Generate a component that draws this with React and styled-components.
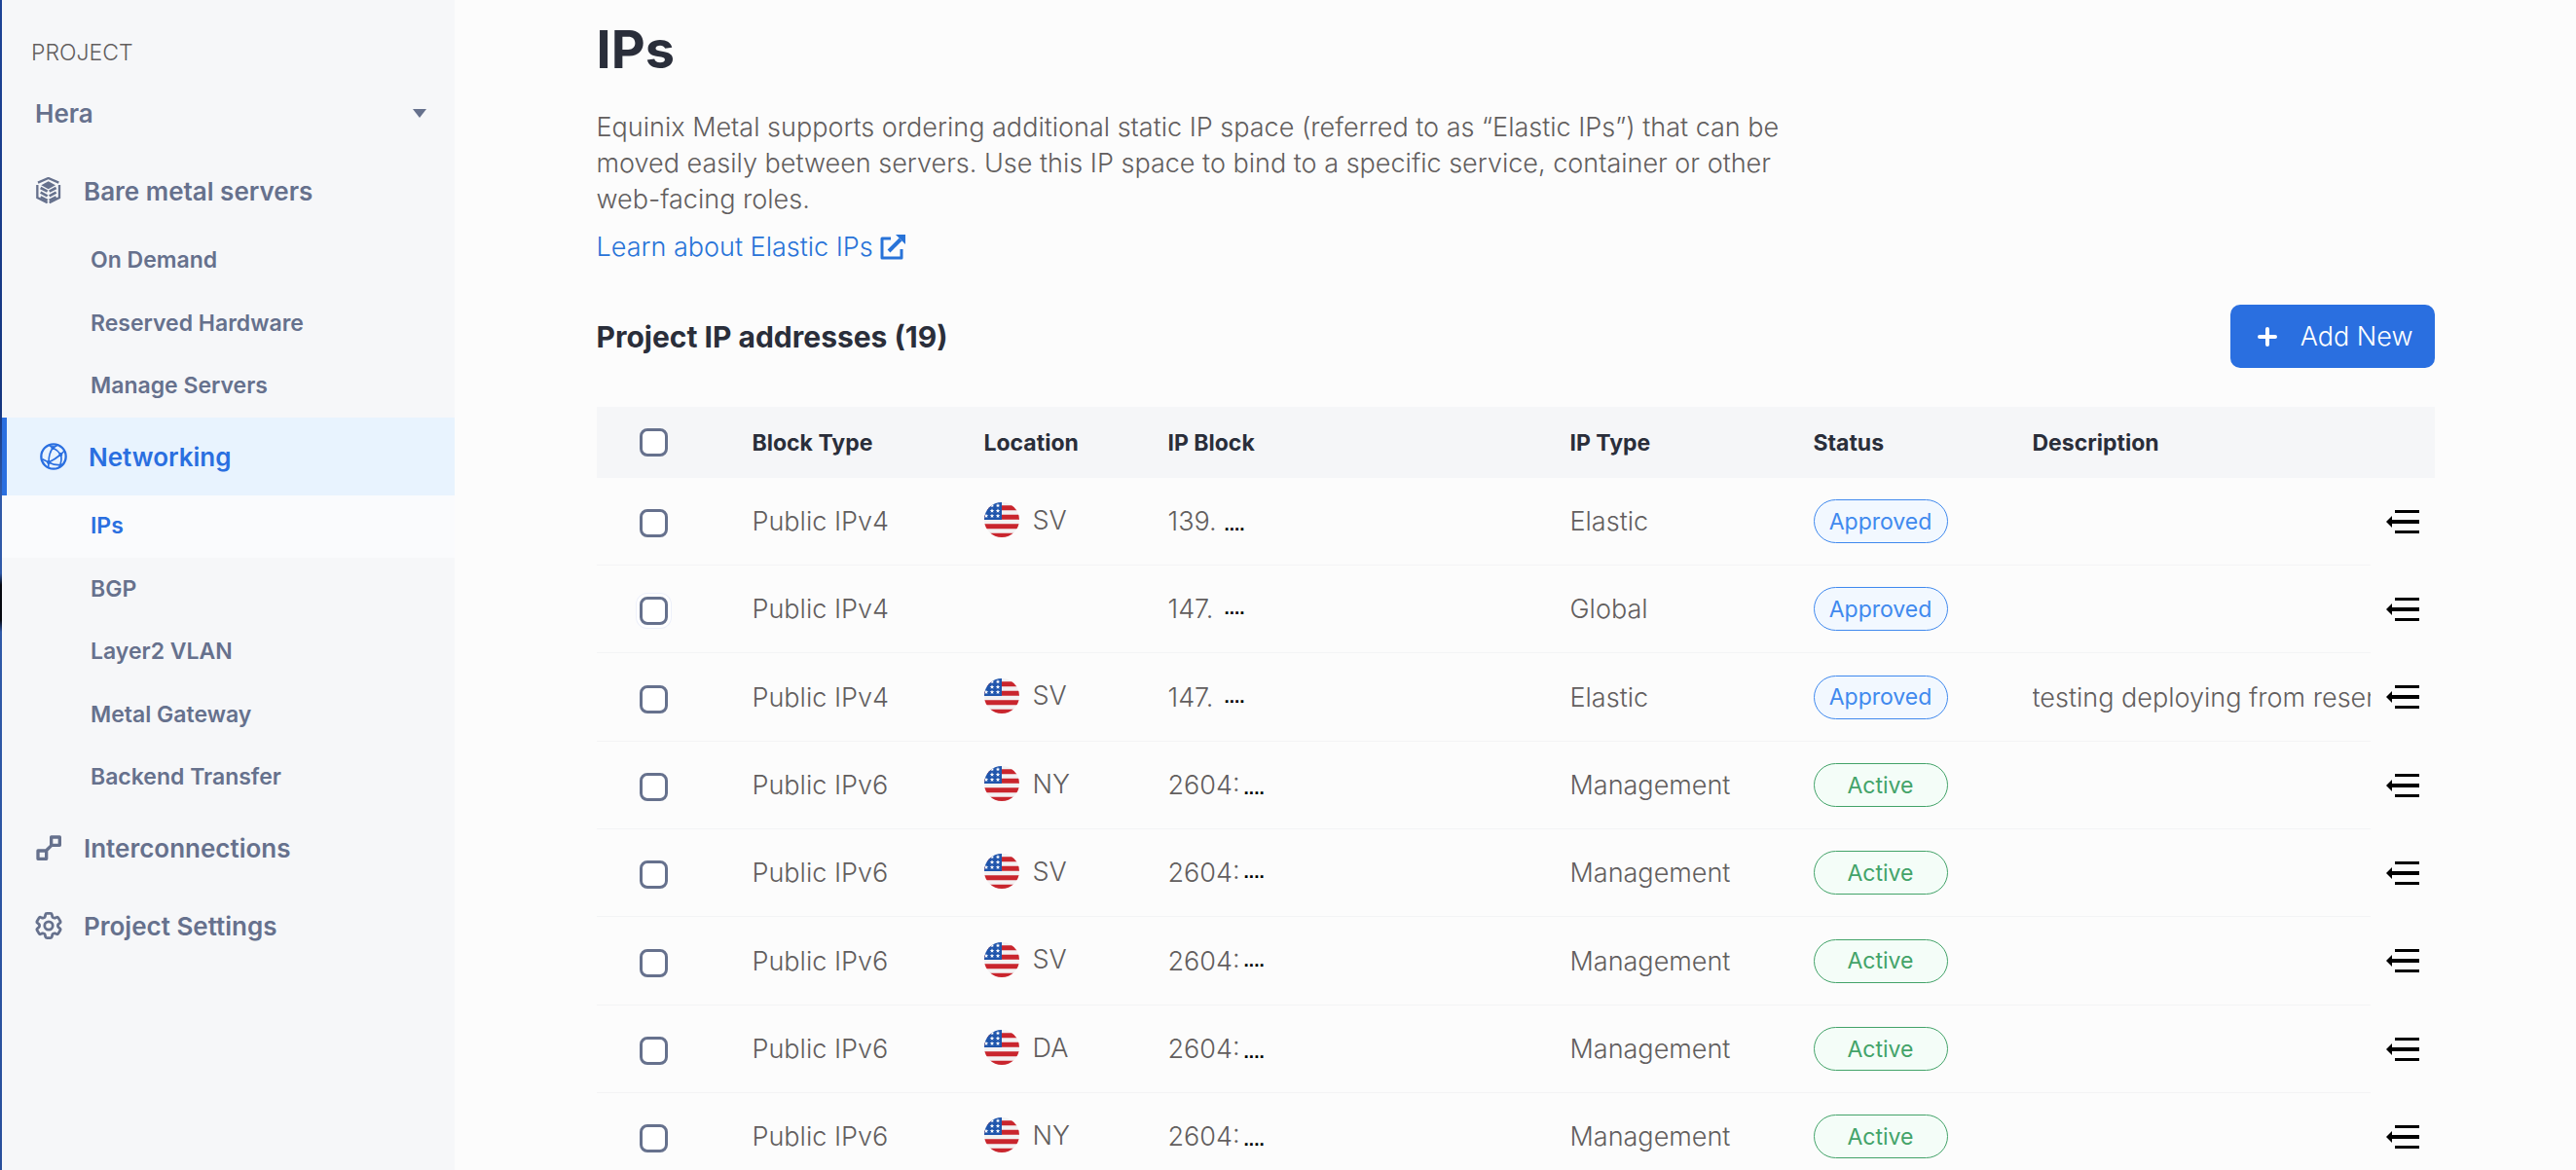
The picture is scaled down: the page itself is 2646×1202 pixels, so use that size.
import React from "react";
import styled, { createGlobalStyle, css, ThemeProvider } from "styled-components";
import { HiOutlineCog6Tooth } from "react-icons/hi2";

const theme = {
  font: `Inter, "Open Sans", "Liberation Sans", sans-serif`,
  color: {
    page: "#fcfcfc",
    panel: "#f6f7f9",
    slate: "#66718d",
    text: "#625e5e",
    heading: "#2a2e3a",
    blue: "#2a6fe0",
    link: "#2873d8",
    activeBg: "#e8f3fe",
    line: "#f3f4f5",
  },
};

const GlobalStyle = createGlobalStyle`
  * {
    box-sizing: border-box;
  }

  body {
    margin: 0;
    background: #fcfcfc;
  }
`;

const Page = styled.div`
  display: flex;
  height: 100vh;
  overflow: hidden;
  font-family: ${({ theme }) => theme.font};
  font-size: 27px;
  font-weight: 300;
  color: ${({ theme }) => theme.color.text};
  background: ${({ theme }) => theme.color.page};
`;

const Edge = styled.div`
  flex: none;
  width: 2px;
  background: linear-gradient(
    #1d4396 0%,
    #14357f 35%,
    #2f59a8 42%,
    #2f59a8 49%,
    #05070f 50%,
    #05070f 53%,
    #2f59a8 54%,
    #284f9c 100%
  );
`;

const Sidebar = styled.aside`
  flex: none;
  width: 465px;
  background: ${({ theme }) => theme.color.panel};
`;

const ProjectLabel = styled.label`
  display: block;
  padding: 40px 30px 0;
  font-size: 23px;
  line-height: 28px;
`;

const ProjectPicker = styled.div`
  display: flex;
  align-items: center;
  height: 88px;
  padding: 8px 28px 0 34px;
`;

const ProjectSelect = styled.select`
  flex: 1;
  appearance: none;
  border: 0;
  padding: 0;
  background: none;
  font: inherit;
  font-size: 26px;
  font-weight: 600;
  color: ${({ theme }) => theme.color.slate};
`;

const Caret = styled.svg`
  flex: none;
  width: 16px;
  height: 9px;
  fill: ${({ theme }) => theme.color.slate};
`;

const NavList = styled.ul`
  margin: 0;
  padding: 0;
  list-style: none;
`;

const NavLink = styled.a`
  display: flex;
  align-items: center;
  gap: 22px;
  height: 80px;
  padding-left: 34px;
  font-size: 26px;
  font-weight: 600;
  text-decoration: none;
  color: ${({ theme }) => theme.color.slate};

  svg {
    width: 28px;
    height: 28px;
  }

  ${({ $active, theme }) =>
    $active &&
    css`
      border-left: 5px solid ${theme.color.blue};
      color: ${theme.color.blue};
      background: ${theme.color.activeBg};
    `}
`;

const SubItem = styled.li`
  height: 64px;

  &:nth-child(even) {
    height: 65px;
  }
`;

const SubLink = styled.a`
  display: flex;
  align-items: center;
  height: 100%;
  padding: 0 0 2px 91px;
  font-size: 23px;
  font-weight: 600;
  text-decoration: none;
  color: ${({ theme, $active }) =>
    $active ? theme.color.blue : theme.color.slate};
  background: ${({ $active }) => ($active ? "#fafbfd" : "none")};
`;

const Main = styled.main`
  flex: 1;
  min-width: 0;
  overflow: hidden auto;
  scrollbar-width: none;
`;

const Content = styled.div`
  max-width: 1888px;
  margin: 0 auto;
`;

const Title = styled.h1`
  margin: 0;
  padding-top: 18px;
  font-size: 54px;
  line-height: 66px;
  font-weight: 700;
  color: ${({ theme }) => theme.color.heading};
`;

const Intro = styled.p`
  max-width: 1240px;
  margin: 28px 0 0;
  line-height: 37px;
`;

const LearnLink = styled.a`
  display: inline-flex;
  align-items: center;
  gap: 6px;
  margin-top: 13px;
  line-height: 36px;
  text-decoration: none;
  color: ${({ theme }) => theme.color.link};

  svg {
    width: 28px;
    height: 28px;
  }
`;

const Toolbar = styled.div`
  display: flex;
  align-items: center;
  justify-content: space-between;
  margin: 41px 0 40px;
`;

const SubTitle = styled.h2`
  margin: 0;
  font-size: 30px;
  font-weight: 700;
  color: ${({ theme }) => theme.color.heading};
`;

const AddButton = styled.button`
  display: flex;
  align-items: center;
  gap: 24px;
  height: 65px;
  padding: 0 22px 0 28px;
  border: 0;
  border-radius: 10px;
  font: inherit;
  color: #fff;
  background: ${({ theme }) => theme.color.blue};

  svg {
    width: 20px;
    height: 20px;
  }
`;

const Table = styled.table`
  width: 100%;
  table-layout: fixed;
  border-collapse: separate;
  border-spacing: 0;
`;

const Col = styled.col`
  width: ${({ $width }) => ($width ? `${$width}px` : "auto")};
`;

const HeadCell = styled.th`
  height: 73px;
  padding: 0;
  font-size: 23px;
  font-weight: 700;
  text-align: left;
  color: ${({ theme }) => theme.color.heading};
  background: #f5f6f8;
`;

const Row = styled.tr`
  height: 90px;

  &:nth-child(3n) {
    height: 91px;
  }
`;

const Cell = styled.td`
  padding: 0;
  overflow: hidden;
  white-space: nowrap;
  border-bottom: 1px solid
    ${({ theme, $bare }) => ($bare ? "transparent" : theme.color.line)};
`;

const Check = styled.input`
  display: block;
  appearance: none;
  width: 29px;
  height: 29px;
  margin: 0 0 0 44px;
  border: 3px solid ${({ theme }) => theme.color.slate};
  border-radius: 8px;
  background: #fff;
  box-shadow: ${({ $ring }) =>
    $ring ? "0 0 0 3px #fff, 0 0 0 4px #edf0fa" : "none"};

  td & {
    margin-top: 4px;
  }
`;

const Location = styled.div`
  display: flex;
  align-items: center;
  gap: 14px;
  padding-bottom: 3px;

  svg {
    width: 36px;
    height: 36px;
  }
`;

const Prefix = styled.span`
  display: inline-block;
  min-width: 54px;
`;

const Dots = styled.span`
  margin-left: 4px;
  font-family: "Liberation Sans", Arial, sans-serif;
  font-size: 19px;
  font-weight: 700;
  line-height: 1;
  color: #000;
  vertical-align: ${({ $raised }) => ($raised ? "4px" : "baseline")};
`;

const Badge = styled.span`
  display: flex;
  align-items: center;
  justify-content: center;
  width: 138px;
  height: 45px;
  border: 1px solid;
  border-radius: 23px;
  font-size: 23px;
  font-weight: 400;
  color: ${({ $status }) => ($status === "Active" ? "#43a369" : "#4089ee")};
  background: ${({ $status }) =>
    $status === "Active" ? "#f4fdf8" : "#f2f8ff"};
`;

const MenuButton = styled.button`
  display: block;
  margin: 0 0 0 16px;
  padding: 0;
  border: 0;
  background: none;

  svg {
    display: block;
    width: 34px;
    height: 26px;
  }
`;

const ServersIcon = () => (
  <svg viewBox="-3 0 84 84" fill="none" stroke="currentColor" aria-hidden="true">
    <path d="M6 17 38 3 70 17" strokeWidth="7" />
    <path d="M4 24V63L35 79M72 24V63L41 79" strokeWidth="7" />
    <path d="M38 13 60 25 38 37 16 25Z" fill="currentColor" stroke="none" />
    <path
      d="M14 33 35 44M14 47 35 58M14 61 35 72M62 33 41 44M62 47 41 58M62 61 41 72"
      strokeWidth="8"
    />
  </svg>
);

const NetworkIcon = () => (
  <svg viewBox="0 0 84 84" fill="none" stroke="currentColor" aria-hidden="true">
    <circle cx="42" cy="42" r="38" strokeWidth="7" />
    <path
      d="M40 15C30 28 27 44 27 60M40 15C50 20 58 27 64 36 52 46 40 54 27 60M40 15 28 7M40 15 56 6M64 36 76 24M64 36C68 48 66 62 59 76M27 60 8 50M27 60 26 77M27 60C42 68 56 70 70 66"
      strokeWidth="5"
    />
    <g fill="currentColor" stroke="none">
      <circle cx="40" cy="15" r="6" />
      <circle cx="64" cy="36" r="6" />
      <circle cx="27" cy="60" r="6" />
    </g>
  </svg>
);

const LinkNodesIcon = () => (
  <svg viewBox="-2 -3 84 84" fill="none" stroke="currentColor" aria-hidden="true">
    <path
      d="M7 48H33V73H7ZM48 6H74V31H48ZM32 48 49 31"
      strokeWidth="10"
      strokeLinejoin="round"
    />
  </svg>
);

const ExternalIcon = () => (
  <svg viewBox="0 0 28 28" fill="none" stroke="currentColor" aria-hidden="true">
    <path d="M12 5H3V25H23V16" strokeWidth="3" strokeLinejoin="round" />
    <path d="M10 18 22 6" strokeWidth="4" />
    <path d="M17 1H27V11Z" fill="currentColor" stroke="none" />
  </svg>
);

const PlusIcon = () => (
  <svg viewBox="0 0 20 20" stroke="currentColor" aria-hidden="true">
    <path d="M10 2V18M2 10H18" strokeWidth="4" strokeLinecap="round" />
  </svg>
);

const FlagIcon = () => (
  <svg viewBox="0 0 108 108" role="img" aria-label="United States">
    <clipPath id="flag-round">
      <circle cx="54" cy="54" r="54" />
    </clipPath>
    <g clipPath="url(#flag-round)">
      <path fill="#f3f1f2" d="M0 0H108V108H0Z" />
      <path fill="#c9252d" d="M0 10H108V25H0ZM0 38H108V53H0ZM0 67H108V82H0ZM0 95H108V108H0Z" />
      <path fill="#1f55ac" d="M0 0H54V54H0Z" />
      <g fill="#fff">
        {[
          [24, 10],
          [42, 10],
          [24, 26],
          [42, 26],
          [6, 42],
          [24, 42],
          [42, 42],
        ].map(([x, y]) => (
          <path
            key={`${x}-${y}`}
            transform={`translate(${x} ${y})`}
            d="M0-7 2-2H7L3 1 4 6 0 3-4 6-3 1-7-2H-2Z"
          />
        ))}
      </g>
    </g>
  </svg>
);

const RowMenuIcon = () => (
  <svg viewBox="0 0 34 26" fill="#000" aria-hidden="true">
    <path d="M9 1H34V4H9ZM5 11H34V15H5ZM9 22H34V25H9Z" />
    <path d="M0 13 6 7V19Z" />
  </svg>
);

const nav = [
  {
    label: "Bare metal servers",
    icon: <ServersIcon />,
    items: ["On Demand", "Reserved Hardware", "Manage Servers"],
  },
  {
    label: "Networking",
    icon: <NetworkIcon />,
    active: true,
    items: ["IPs", "BGP", "Layer2 VLAN", "Metal Gateway", "Backend Transfer"],
  },
  { label: "Interconnections", icon: <LinkNodesIcon /> },
  {
    label: "Project Settings",
    icon: (
      <HiOutlineCog6Tooth
        viewBox="2 2 20 20"
        stroke="currentColor"
        strokeWidth="2"
        aria-hidden="true"
      />
    ),
  },
];

const columns = [
  { label: "", width: 160 },
  { label: "Block Type", width: 238 },
  { label: "Location", width: 189 },
  { label: "IP Block", width: 413 },
  { label: "IP Type", width: 250 },
  { label: "Status", width: 225 },
  { label: "Description" },
  { label: "", width: 66 },
];

const rows = [
  { block: "Public IPv4", place: "SV", ip: "139.", type: "Elastic", status: "Approved" },
  { block: "Public IPv4", ip: "147.", raised: true, type: "Global", status: "Approved", ring: true },
  {
    block: "Public IPv4",
    place: "SV",
    ip: "147.",
    raised: true,
    type: "Elastic",
    status: "Approved",
    description: "testing deploying from reser",
  },
  { block: "Public IPv6", place: "NY", ip: "2604:", type: "Management", status: "Active" },
  { block: "Public IPv6", place: "SV", ip: "2604:", raised: true, type: "Management", status: "Active" },
  { block: "Public IPv6", place: "SV", ip: "2604:", raised: true, type: "Management", status: "Active" },
  { block: "Public IPv6", place: "DA", ip: "2604:", type: "Management", status: "Active" },
  { block: "Public IPv6", place: "NY", ip: "2604:", type: "Management", status: "Active" },
];

const Navigation = () => (
  <nav>
    <NavList>
      {nav.map(({ label, icon, active, items }) => (
        <li key={label}>
          <NavLink href="#" $active={active}>
            {icon}
            {label}
          </NavLink>
          {items && (
            <NavList>
              {items.map((item) => (
                <SubItem key={item}>
                  <SubLink href="#" $active={item === "IPs"}>
                    {item}
                  </SubLink>
                </SubItem>
              ))}
            </NavList>
          )}
        </li>
      ))}
    </NavList>
  </nav>
);

const AddressTable = () => (
  <Table>
    <colgroup>
      {columns.map(({ width }, i) => (
        <Col key={i} $width={width} />
      ))}
    </colgroup>
    <thead>
      <tr>
        {columns.map(({ label }, i) => (
          <HeadCell key={i} scope="col">
            {i === 0 ? <Check type="checkbox" aria-label="Select all" /> : label}
          </HeadCell>
        ))}
      </tr>
    </thead>
    <tbody>
      {rows.map((row, i) => (
        <Row key={i}>
          <Cell>
            <Check
              type="checkbox"
              aria-label={`Select row ${i + 1}`}
              $ring={row.ring}
            />
          </Cell>
          <Cell>{row.block}</Cell>
          <Cell>
            {row.place && (
              <Location>
                <FlagIcon />
                {row.place}
              </Location>
            )}
          </Cell>
          <Cell>
            <Prefix>{row.ip}</Prefix>
            <Dots $raised={row.raised}>....</Dots>
          </Cell>
          <Cell>{row.type}</Cell>
          <Cell>
            <Badge $status={row.status}>{row.status}</Badge>
          </Cell>
          <Cell>{row.description}</Cell>
          <Cell $bare>
            <MenuButton aria-label="Row actions">
              <RowMenuIcon />
            </MenuButton>
          </Cell>
        </Row>
      ))}
    </tbody>
  </Table>
);

const App = () => (
  <ThemeProvider theme={theme}>
    <GlobalStyle />
    <Page>
      <Edge />
      <Sidebar>
        <ProjectLabel htmlFor="project">PROJECT</ProjectLabel>
        <ProjectPicker>
          <ProjectSelect id="project" defaultValue="Hera">
            <option>Hera</option>
          </ProjectSelect>
          <Caret viewBox="0 0 16 9" aria-hidden="true">
            <path d="M1 0H15L8 9Z" />
          </Caret>
        </ProjectPicker>
        <Navigation />
      </Sidebar>
      <Main>
        <Content>
          <Title>IPs</Title>
          <Intro>
            Equinix Metal supports ordering additional static IP space (referred
            to as “Elastic IPs”) that can be moved easily between servers. Use
            this IP space to bind to a specific service, container or other
            web-facing roles.
          </Intro>
          <LearnLink href="#">
            Learn about Elastic IPs
            <ExternalIcon />
          </LearnLink>
          <Toolbar>
            <SubTitle>Project IP addresses (19)</SubTitle>
            <AddButton type="button">
              <PlusIcon />
              Add New
            </AddButton>
          </Toolbar>
          <AddressTable />
        </Content>
      </Main>
    </Page>
  </ThemeProvider>
);

export default App;
